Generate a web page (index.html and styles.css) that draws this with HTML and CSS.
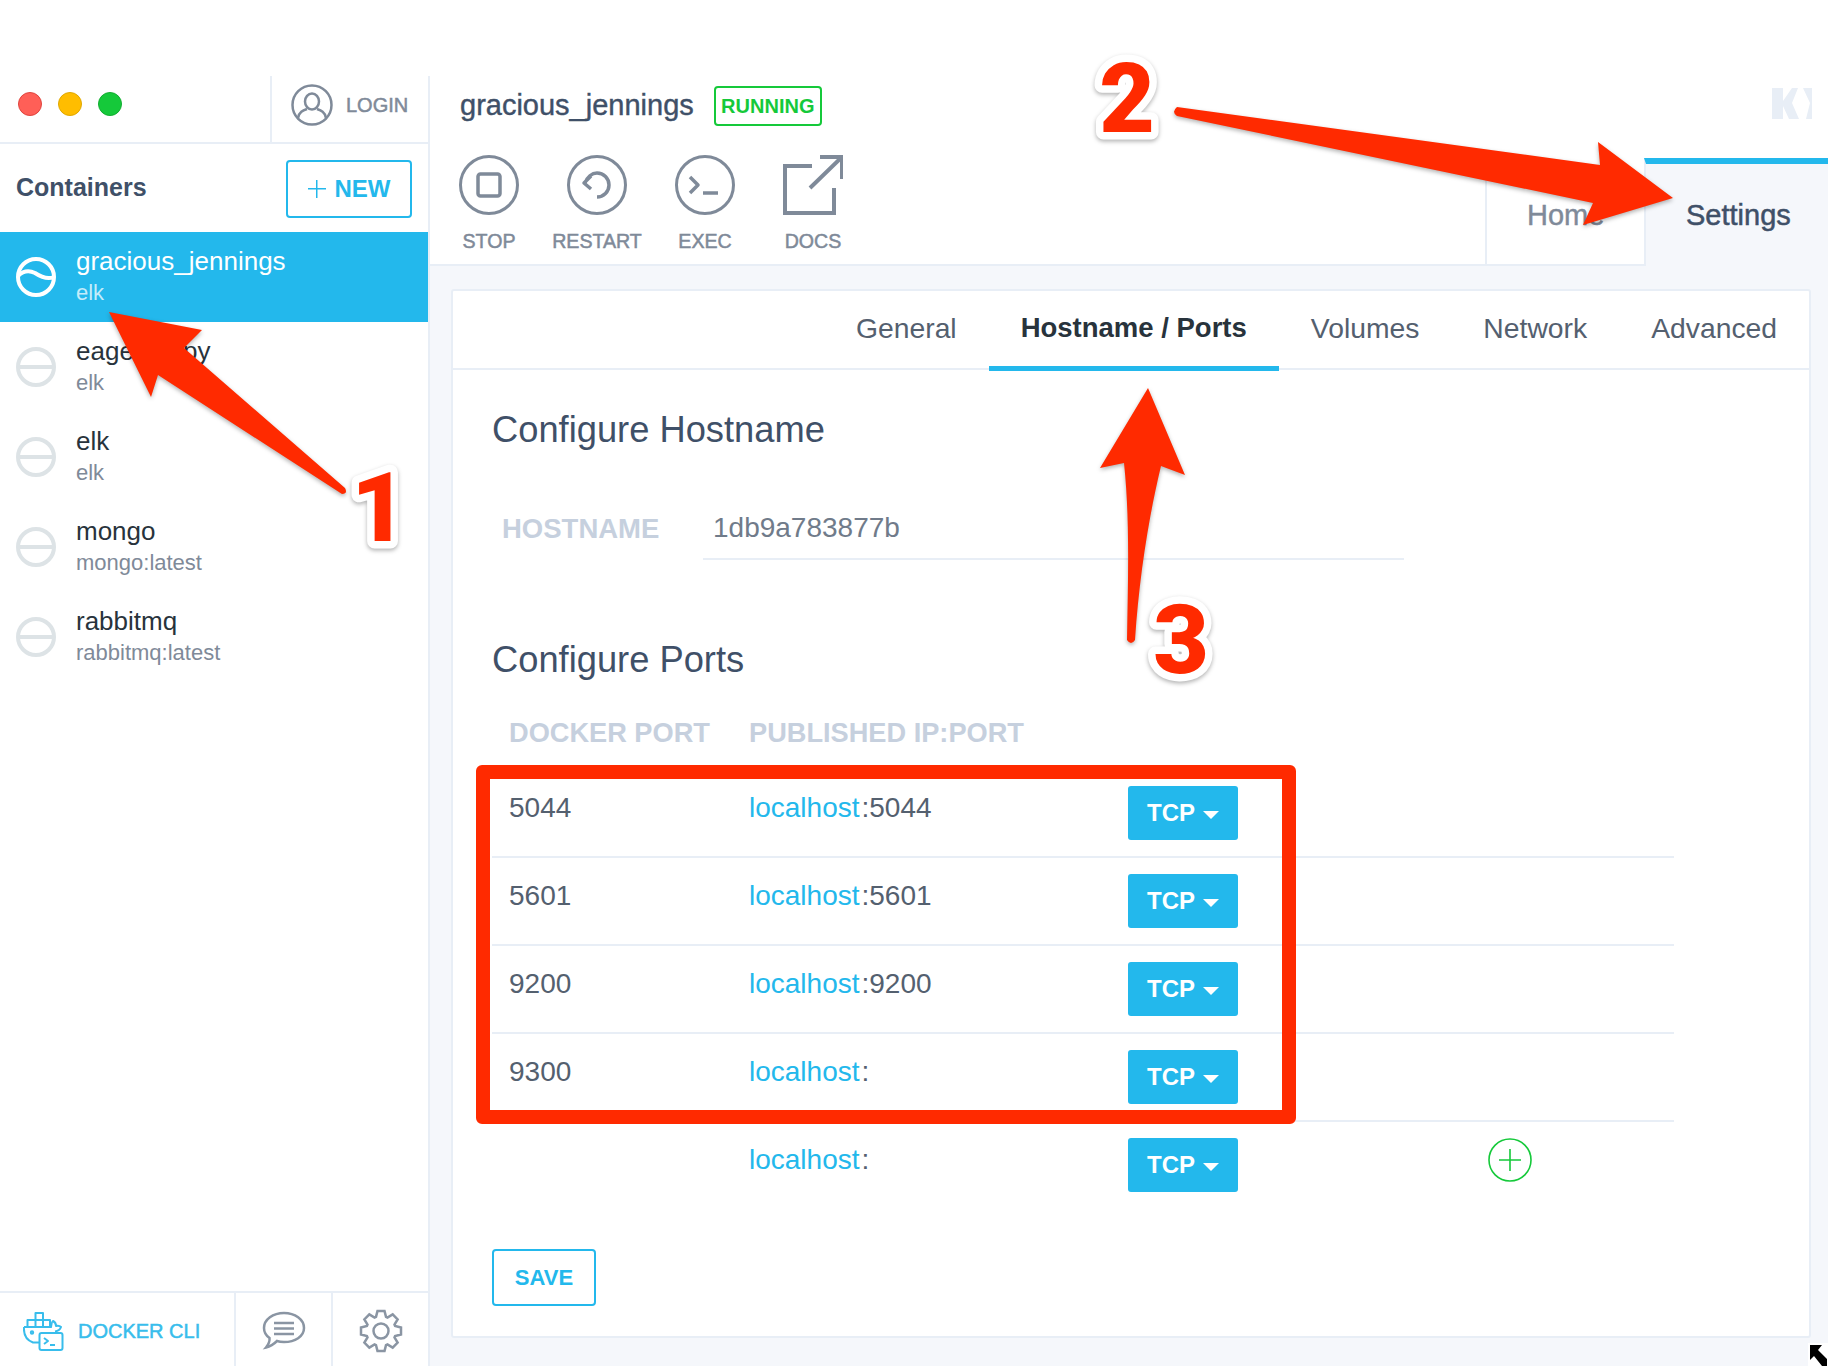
FILE: index.html
```html
<!DOCTYPE html>
<html lang="en">

<head>
    <meta charset="UTF-8">
    <title>Kitematic - Hostname / Ports</title>
    <link rel="stylesheet" href="styles.css">
</head>

<body>
    <div class="app">
        <aside class="sidebar">
            <div class="window-bar">
                <div class="traffic-lights">
                    <span class="light light-red"></span>
                    <span class="light light-yellow"></span>
                    <span class="light light-green"></span>
                </div>
                <div class="login">
                    <svg class="user-icon" viewBox="0 0 42 42" width="42" height="42">
                        <circle cx="21" cy="21" r="19.5" />
                        <ellipse cx="21" cy="17.5" rx="7" ry="8" />
                        <path d="M7 34 C8 28 12 26.5 16 25 M35 34 C34 28 30 26.5 26 25" />
                    </svg>
                    <span>LOGIN</span>
                </div>
            </div>

            <div class="containers-head">
                <h2>Containers</h2>
                <button type="button" class="new-btn"><span class="thin-plus"></span>NEW</button>
            </div>

            <ul class="container-list">
                <li class="container-item selected">
                    <svg class="state-icon" viewBox="0 0 40 40" width="40" height="40">
                        <circle cx="20" cy="20" r="18" />
                        <path d="M2 19 C7 14 13 13 19 16 C25 20 31 23 38 20" />
                    </svg>
                    <div>
                        <div class="container-name">gracious_jennings</div>
                        <div class="container-image">elk</div>
                    </div>
                </li>
                <li class="container-item">
                    <svg class="state-icon" viewBox="0 0 40 40" width="40" height="40">
                        <circle cx="20" cy="20" r="18" />
                        <path d="M2 20 H38" />
                    </svg>
                    <div>
                        <div class="container-name">eager_lippy</div>
                        <div class="container-image">elk</div>
                    </div>
                </li>
                <li class="container-item">
                    <svg class="state-icon" viewBox="0 0 40 40" width="40" height="40">
                        <circle cx="20" cy="20" r="18" />
                        <path d="M2 20 H38" />
                    </svg>
                    <div>
                        <div class="container-name">elk</div>
                        <div class="container-image">elk</div>
                    </div>
                </li>
                <li class="container-item">
                    <svg class="state-icon" viewBox="0 0 40 40" width="40" height="40">
                        <circle cx="20" cy="20" r="18" />
                        <path d="M2 20 H38" />
                    </svg>
                    <div>
                        <div class="container-name">mongo</div>
                        <div class="container-image">mongo:latest</div>
                    </div>
                </li>
                <li class="container-item">
                    <svg class="state-icon" viewBox="0 0 40 40" width="40" height="40">
                        <circle cx="20" cy="20" r="18" />
                        <path d="M2 20 H38" />
                    </svg>
                    <div>
                        <div class="container-name">rabbitmq</div>
                        <div class="container-image">rabbitmq:latest</div>
                    </div>
                </li>
            </ul>

            <div class="sidebar-foot">
                <div class="docker-cli">
                    <svg class="docker-icon" viewBox="0 0 41 39" width="41" height="39">
                        <path d="M12.5 1 H20 V8 H12.5 Z M4.5 8 H12.5 V15 H4.5 Z M12.5 8 H20 V15 H12.5 Z M20 8 H27 V15 H20 Z" />
                        <path d="M1 15 H28 C28.5 12 29 9 30 9 C32 10 33 12 33 14 C35 13.5 37 14 38 15 C37 18 35 19 32 19.5 M1 15 C0.5 22 3 28 10 30.5 H16" />
                        <rect x="16.5" y="21" width="23" height="17" rx="2" />
                        <path d="M21 26 L25 29 L21 32 M27 33 H32" />
                        <circle cx="9" cy="20.5" r="1.2" />
                    </svg>
                    <span>DOCKER CLI</span>
                </div>
                <div class="foot-btn">
                    <svg class="foot-icon" viewBox="0 0 44 44" width="44" height="44">
                        <path d="M22 4 C33 4 42 10.5 42 19 C42 27.5 33 33 22 33 C19 33 17 32.7 15 32 C12 35 8 37.5 4 38.5 C6 36 8 32.5 7.5 29 C4 26.5 2 23 2 19 C2 10.5 11 4 22 4 Z" />
                        <path d="M12 14 H32 M12 19.5 H32 M12 25 H32" />
                    </svg>
                </div>
                <div class="foot-btn">
                    <svg class="foot-icon" viewBox="0 0 44 44" width="44" height="44">
                        <polygon transform="translate(22 22)" points="-5,-14.1 -3.5,-20 3.5,-20 5,-14.1 6.43,-13.5 11.67,-16.62 16.62,-11.67 13.5,-6.43 14.1,-5 20,-3.5 20,3.5 14.1,5 13.5,6.43 16.62,11.67 11.67,16.62 6.43,13.5 5,14.1 3.5,20 -3.5,20 -5,14.1 -6.43,13.5 -11.67,16.62 -16.62,11.67 -13.5,6.43 -14.1,5 -20,3.5 -20,-3.5 -14.1,-5 -13.5,-6.43 -16.62,-11.67 -11.67,-16.62 -6.43,-13.5" />
                        <circle cx="22" cy="22" r="7.5" />
                    </svg>
                </div>
            </div>
        </aside>

        <main class="main">
            <header class="main-head">
                <div class="head-left">
                    <div class="title-row">
                        <h1>gracious_jennings</h1>
                        <span class="status-badge">RUNNING</span>
                    </div>
                    <div class="actions">
                        <div class="action">
                            <svg class="action-icon" viewBox="0 0 60 60" width="60" height="60">
                                <circle cx="30" cy="30" r="28.5" />
                                <rect x="19" y="19" width="22" height="22" rx="2.5" class="bold-stroke" />
                            </svg>
                            <span>STOP</span>
                        </div>
                        <div class="action">
                            <svg class="action-icon" viewBox="0 0 60 60" width="60" height="60">
                                <circle cx="30" cy="30" r="28.5" />
                                <path class="bold-stroke" d="M18 28 C20 22 25 18 30 18 A12 12 0 0 1 30 42 M24 21 L17 28 L24 34" />
                            </svg>
                            <span>RESTART</span>
                        </div>
                        <div class="action">
                            <svg class="action-icon" viewBox="0 0 60 60" width="60" height="60">
                                <circle cx="30" cy="30" r="28.5" />
                                <path class="bold-stroke" d="M15 22 L23 30 L15 38 M28 38 H43" />
                            </svg>
                            <span>EXEC</span>
                        </div>
                        <div class="action">
                            <svg class="action-icon" viewBox="0 0 60 60" width="60" height="60">
                                <path class="square-line" d="M29 11 H2 V58 H51 V33 M27 33 L59 2 M37 2 H59 V24" />
                            </svg>
                            <span>DOCS</span>
                        </div>
                    </div>
                </div>
                <div class="head-right">
                    <svg class="brand-logo" viewBox="0 0 40 31" width="40" height="31">
                        <path d="M0 0 H11 V13 L20 0 H26 L20 15 L27 31 H17 L11 18 V31 H0 Z" />
                        <path d="M31 0 H40 V31 H34 L38 15 Z" />
                    </svg>
                    <nav class="main-tabs">
                        <div class="main-tab">Home</div>
                        <div class="main-tab active">Settings</div>
                    </nav>
                </div>
            </header>

            <section class="panel">
                <nav class="panel-tabs">
                    <div class="panel-tab">General</div>
                    <div class="panel-tab active">Hostname / Ports</div>
                    <div class="panel-tab">Volumes</div>
                    <div class="panel-tab">Network</div>
                    <div class="panel-tab">Advanced</div>
                </nav>

                <div class="panel-body">
                    <h3 class="section-title">Configure Hostname</h3>
                    <div class="hostname-row">
                        <label for="hostname">HOSTNAME</label>
                        <input type="text" id="hostname" value="1db9a783877b">
                    </div>

                    <h3 class="section-title ports-title">Configure Ports</h3>
                    <div class="ports-head">
                        <div class="col-docker">DOCKER PORT</div>
                        <div>PUBLISHED IP:PORT</div>
                    </div>

                    <div class="port-row">
                        <div class="col-docker">5044</div>
                        <div class="col-published"><span class="port-host">localhost</span>:5044</div>
                        <button type="button" class="proto-btn">TCP<span class="caret"></span></button>
                    </div>
                    <div class="port-row">
                        <div class="col-docker">5601</div>
                        <div class="col-published"><span class="port-host">localhost</span>:5601</div>
                        <button type="button" class="proto-btn">TCP<span class="caret"></span></button>
                    </div>
                    <div class="port-row">
                        <div class="col-docker">9200</div>
                        <div class="col-published"><span class="port-host">localhost</span>:9200</div>
                        <button type="button" class="proto-btn">TCP<span class="caret"></span></button>
                    </div>
                    <div class="port-row">
                        <div class="col-docker">9300</div>
                        <div class="col-published"><span class="port-host">localhost</span>:</div>
                        <button type="button" class="proto-btn">TCP<span class="caret"></span></button>
                    </div>
                    <div class="port-row last">
                        <div class="col-docker"></div>
                        <div class="col-published"><span class="port-host">localhost</span>:</div>
                        <button type="button" class="proto-btn">TCP<span class="caret"></span></button>
                        <svg class="add-port" viewBox="0 0 44 44" width="44" height="44">
                            <circle cx="22" cy="22" r="21" />
                            <path d="M22 11 V33 M11 22 H33" />
                        </svg>
                    </div>

                    <button type="button" class="save-btn">SAVE</button>
                </div>
            </section>
        </main>
    </div>

    <!-- annotations drawn on top of the screenshot -->
    <div class="mark-box"></div>
    <svg class="marks" viewBox="0 0 1828 1366" width="1828" height="1366">
        <path d="M109 312 L202 330 L184 348 L345 488 Q348 494 342 494 L158 375 L151 397 Z" />
        <path d="M1177 107 L1600 165 L1598 142 L1673 198 L1583 225 L1593 203 L1177 116 Q1171 112 1177 107 Z" />
        <path d="M1148 388 L1185 475 L1161 466 C1148 520 1139 580 1135 640 Q1131 646 1127 640 C1128 580 1130 520 1124 463 L1100 468 Z" />
        <text x="379" y="541">1</text>
        <text x="1127" y="132">2</text>
        <text x="1181" y="673">3</text>
    </svg>
    <svg class="cursor-mark" viewBox="0 0 20 23" width="20" height="23">
        <path class="cursor-edge" d="M0 0 H20 V23 H0 Z" />
        <path d="M2 2 H14 L10 7 L19 16 V23 H14 L6 13 L2 17 Z" />
    </svg>
</body>

</html>
```

FILE: styles.css
```css
* {
    box-sizing: border-box;
}

html,
body {
    margin: 0;
    padding: 0;
}

body {
    width: 1828px;
    height: 1366px;
    overflow: hidden;
    position: relative;
    background: #fff;
    font-family: 'Liberation Sans', Arial, sans-serif;
    color: #3f5068;
}

h1,
h2,
h3 {
    margin: 0;
    font-weight: normal;
}

.app {
    display: flex;
    height: 1366px;
    padding-top: 76px;
}

/* sidebar */
.sidebar {
    width: 430px;
    flex: none;
    display: flex;
    flex-direction: column;
    border-right: 2px solid #e8eef6;
    background: #fff;
}

.window-bar {
    height: 68px;
    flex: none;
    display: flex;
    border-bottom: 2px solid #e8eef6;
}

.traffic-lights {
    width: 272px;
    display: flex;
    gap: 16px;
    padding: 16px 0 0 18px;
    border-right: 2px solid #e8eef6;
}

.light {
    width: 24px;
    height: 24px;
    border-radius: 50%;
    border: 1px solid;
}

.light-red {
    background: #ff5f57;
    border-color: #e0443e;
}

.light-yellow {
    background: #ffbd00;
    border-color: #e0a800;
}

.light-green {
    background: #15c93a;
    border-color: #12ad30;
}

.login {
    flex: 1;
    display: flex;
    align-items: center;
    gap: 13px;
    padding: 0 0 8px 19px;
    font-size: 20px;
    color: #7f8a99;
    -webkit-text-stroke: 0.5px #7f8a99;
}

.user-icon,
.action-icon,
.foot-icon {
    fill: none;
    stroke: #7f8a99;
    stroke-width: 2.5;
}

.containers-head {
    height: 88px;
    flex: none;
    display: flex;
    align-items: center;
    justify-content: space-between;
    padding: 0 16px 0 16px;
}

.containers-head h2 {
    font-size: 25px;
    font-weight: bold;
    margin-top: -2px;
}

.new-btn {
    width: 126px;
    height: 58px;
    margin-top: 2px;
    display: flex;
    align-items: center;
    justify-content: center;
    gap: 9px;
    padding: 0;
    background: #fff;
    border: 2px solid #23b8ec;
    border-radius: 4px;
    color: #23b8ec;
    font-family: inherit;
    font-size: 24px;
    font-weight: bold;
}

.thin-plus {
    width: 18px;
    height: 18px;
    background:
        linear-gradient(#23b8ec, #23b8ec) center / 18px 1.5px no-repeat,
        linear-gradient(#23b8ec, #23b8ec) center / 1.5px 18px no-repeat;
}

.container-list {
    list-style: none;
    margin: 0;
    padding: 0;
    flex: 1;
}

.container-item {
    height: 90px;
    display: flex;
    align-items: center;
    gap: 20px;
    padding-left: 16px;
}

.container-item.selected {
    background: #23b8ec;
}

.state-icon {
    fill: none;
    stroke: #dde3e6;
    stroke-width: 4;
    flex: none;
}

.selected .state-icon {
    stroke: #fff;
}

.container-name {
    font-size: 26px;
    line-height: 30px;
    color: #28333c;
}

.container-image {
    margin-top: 2px;
    font-size: 22px;
    line-height: 30px;
    color: #7f8a99;
}

.selected .container-name {
    color: #fff;
}

.selected .container-image {
    color: #c4ecfa;
}

.sidebar-foot {
    height: 75px;
    flex: none;
    display: flex;
    border-top: 2px solid #e8eef6;
}

.docker-cli {
    width: 234px;
    display: flex;
    align-items: center;
    gap: 14px;
    padding: 3px 0 0 23px;
    font-size: 20px;
    color: #38bdec;
    -webkit-text-stroke: 0.5px #38bdec;
}

.docker-icon {
    flex: none;
    fill: none;
    stroke: #38bdec;
    stroke-width: 2;
    stroke-linejoin: round;
}

.foot-btn {
    flex: 1;
    display: flex;
    align-items: center;
    justify-content: center;
    padding-top: 2px;
    border-left: 2px solid #e8eef6;
}

.foot-icon {
    stroke: #8a95a3;
}

/* main area */
.main {
    flex: 1;
    display: flex;
    flex-direction: column;
    background: #f5f7fb;
}

.main-head {
    height: 190px;
    flex: none;
    display: flex;
    justify-content: space-between;
    background: #fff;
    border-bottom: 2px solid #e8eef6;
}

.head-left {
    padding-left: 5px;
}

.title-row {
    display: flex;
    align-items: center;
    gap: 20px;
    height: 60px;
    padding-left: 25px;
}

.title-row h1 {
    font-size: 29px;
    -webkit-text-stroke: 0.4px #3f5068;
    margin-top: -2px;
}

.status-badge {
    height: 40px;
    width: 108px;
    display: flex;
    align-items: center;
    justify-content: center;
    border: 2px solid #15c93a;
    border-radius: 4px;
    color: #15c93a;
    font-size: 20px;
    font-weight: bold;
}

.actions {
    display: flex;
    margin-top: 19px;
}

.action {
    width: 108px;
    display: flex;
    flex-direction: column;
    align-items: center;
    gap: 14px;
    font-size: 19.6px;
    line-height: 24px;
    color: #7f8a99;
    -webkit-text-stroke: 0.5px #7f8a99;
}

.action-icon {
    display: block;
    stroke-width: 3;
}

.bold-stroke {
    stroke-width: 3.5;
    stroke-linejoin: round;
}

.square-line {
    stroke-width: 4;
}

.head-right {
    display: flex;
    flex-direction: column;
    align-items: flex-end;
    justify-content: space-between;
}

.brand-logo {
    fill: #e8eef6;
    margin: 12px 16px 0 0;
}

.main-tabs {
    display: flex;
    height: 108px;
    margin-bottom: -2px;
    font-size: 29px;
}

.main-tab {
    width: 159px;
    display: flex;
    align-items: center;
    padding: 8px 0 0 40px;
    border-left: 2px solid #e8eef6;
    border-bottom: 2px solid #e8eef6;
    color: #7f8a99;
    -webkit-text-stroke: 0.4px #7f8a99;
}

.main-tab.active {
    width: 184px;
    padding: 0 0 0 40px;
    background: #f5f7fb;
    border-top: 6px solid #23b8ec;
    border-left: 2px solid #e8eef6;
    border-bottom: none;
    color: #3f5068;
    -webkit-text-stroke: 0.5px #3f5068;
}

.panel {
    flex: 1;
    margin: 23px 17px 28px 21px;
    background: #fff;
    border: 2px solid #e8eef6;
    border-radius: 3px;
}

.panel-tabs {
    height: 79px;
    display: flex;
    justify-content: flex-end;
    border-bottom: 2px solid #e8eef6;
    font-size: 28.3px;
    color: #54606f;
}

.panel-tab {
    height: 80px;
    padding: 0 32px;
    display: flex;
    align-items: center;
    padding-bottom: 6px;
}

.panel-tab.active {
    color: #28333c;
    font-size: 27.5px;
    font-weight: bold;
    border-bottom: 5px solid #23b8ec;
    padding-bottom: 1px;
}

.panel-body {
    padding: 38px 0 0 39px;
}

.section-title {
    font-size: 36.3px;
    line-height: 44px;
}

.hostname-row {
    display: flex;
    align-items: center;
    margin-top: 46px;
    padding-left: 10px;
}

.hostname-row label {
    width: 201px;
    font-size: 27.5px;
    font-weight: bold;
    color: #c6d0de;
}

.hostname-row input {
    width: 701px;
    height: 62px;
    padding: 0 10px;
    border: none;
    border-bottom: 2px solid #e8eef6;
    outline: none;
    font-family: inherit;
    font-size: 28px;
    color: #707b8a;
}

.ports-title {
    margin-top: 78px;
}

.ports-head {
    display: flex;
    margin-top: 34px;
    margin-bottom: 20px;
    padding-left: 17px;
    font-size: 27.2px;
    line-height: 34px;
    font-weight: bold;
    color: #c6d0de;
}

.col-docker {
    width: 240px;
    flex: none;
}

.port-row {
    width: 1182px;
    height: 88px;
    display: flex;
    align-items: flex-start;
    padding-left: 17px;
    border-bottom: 2px solid #e8eef6;
    font-size: 28px;
    color: #54606f;
}

.port-row.last {
    border-bottom: none;
}

.port-row .col-docker,
.col-published {
    padding-top: 21px;
    line-height: 34px;
}

.col-published {
    width: 379px;
    flex: none;
}

.port-host {
    margin-right: 2px;
    color: #23b8ec;
}

.proto-btn {
    width: 110px;
    height: 54px;
    margin-top: 16px;
    flex: none;
    display: flex;
    align-items: center;
    justify-content: center;
    gap: 8px;
    padding: 0;
    background: #23b8ec;
    border: none;
    border-radius: 3px;
    color: #fff;
    font-family: inherit;
    font-size: 24px;
    font-weight: bold;
}

.caret {
    width: 0;
    height: 0;
    margin-top: 4px;
    border-left: 8px solid transparent;
    border-right: 8px solid transparent;
    border-top: 8px solid #fff;
}

.add-port {
    margin: 16px 0 0 250px;
    fill: none;
    stroke: #15c93a;
    stroke-width: 1.6;
}

.save-btn {
    display: block;
    width: 104px;
    height: 57px;
    margin-top: 39px;
    padding: 0;
    background: #fff;
    border: 2px solid #23b8ec;
    border-radius: 4px;
    color: #23b8ec;
    font-family: inherit;
    font-size: 22px;
    font-weight: bold;
}

/* annotations */
.mark-box {
    position: absolute;
    left: 476px;
    top: 765px;
    width: 820px;
    height: 359px;
    border: 14px solid #ff2a00;
    border-radius: 6px;
}

.marks {
    position: absolute;
    left: 0;
    top: 0;
    fill: #ff2a00;
    filter: drop-shadow(0 2px 2px rgba(0, 0, 0, 0.3));
}

.marks text {
    font-family: Roboto, 'Liberation Sans', sans-serif;
    font-size: 96px;
    font-weight: 900;
    text-anchor: middle;
    stroke: #fff;
    stroke-width: 15px;
    stroke-linejoin: round;
    paint-order: stroke;
}

.cursor-mark {
    position: absolute;
    right: 0;
    bottom: 0;
    fill: #000;
}

.cursor-edge {
    fill: #fff;
}
```
